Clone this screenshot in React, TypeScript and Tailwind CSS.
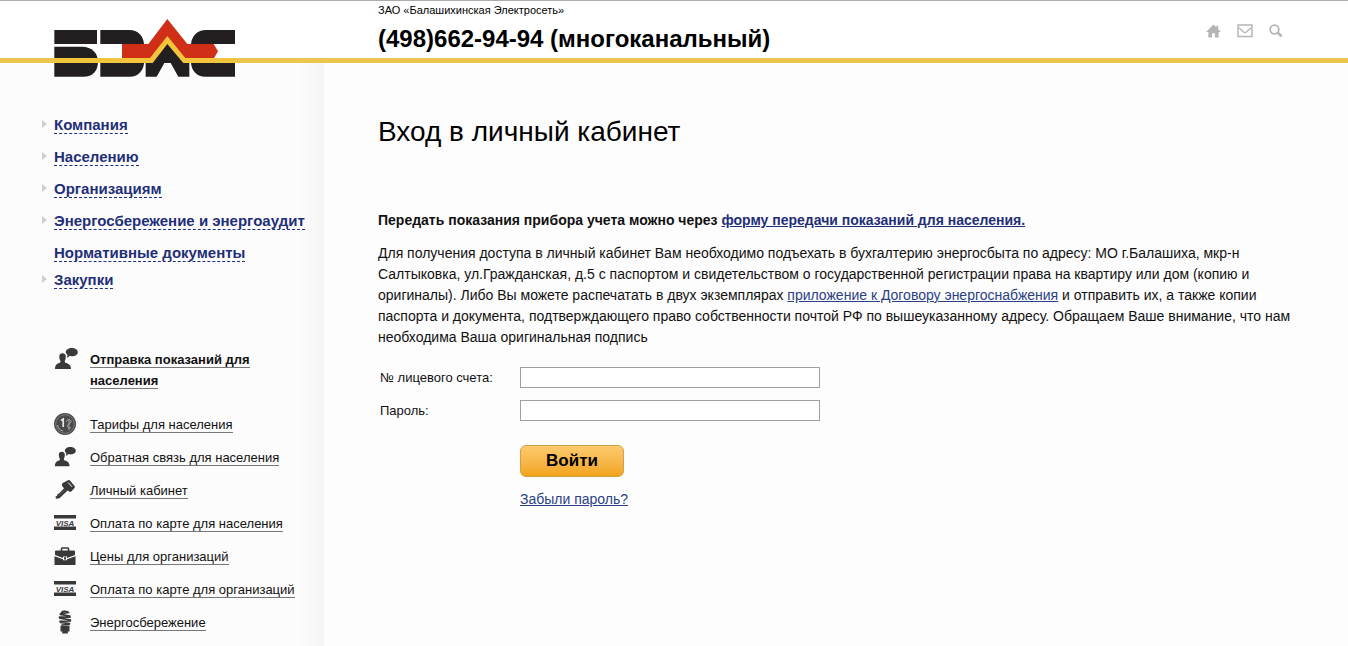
import type { ReactNode } from "react";

function Logo() {
  return (
    <svg viewBox="162 57 543 174" width="181" height="58" role="img" aria-label="БЭЛС">
      <g fill="#231f20">
        <path d="M163 90H291V132H163Z" />
        <path d="M163 140H246C276 140 294 160 294 185C294 212 278 230 250 230H163Z" />
        <path d="M301 90H388C414 90 430 108 432 132H301Z" />
        <path d="M301 189H432C430 213 414 230 390 230H301Z" />
        <path d="M705 90H618C592 90 575 108 573 132H705Z" />
        <path d="M705 189H573C575 213 590 230 616 230H705Z" />
        <path d="M437 187H456L502 128L550 187H568V230H535L512 189H493L470 230H437Z" />
      </g>
      <path fill="#cf2e17" d="M366 132H445L502 57L562 132H641L654 154L641 176H556L502 112L450 176H366Z" />
      <path fill="#f3c53c" d="M162 174H450L502 108L556 174H705V189H550L502 132L458 189H162Z" />
    </svg>
  );
}

function HomeIcon() {
  return (
    <svg viewBox="0 0 16 14" width="15" height="14" fill="#b5b5b7" aria-hidden="true">
      <path d="M8 0L11 3V1.500H13V5L16 8H13.500V14H9.500V9.500H6.500V14H2.500V8H0Z" />
    </svg>
  );
}

function MailIcon() {
  return (
    <svg viewBox="0 0 16 14" width="16" height="14" fill="none" stroke="#b5b5b7" strokeWidth="1.400" aria-hidden="true">
      <path d="M1 1H15V12.500H1Z" />
      <path d="M1.500 3.500L7 8.300Q8 9 9 8.300L14.500 3.500" />
    </svg>
  );
}

function SearchIcon() {
  return (
    <svg viewBox="0 0 14 14" width="14" height="14" fill="none" stroke="#b5b5b7" aria-hidden="true">
      <circle cx="5.500" cy="5.500" r="4.300" strokeWidth="1.800" />
      <path d="M8.800 8.800L12.600 12.400" strokeWidth="2.600" />
    </svg>
  );
}

function PersonIcon() {
  return (
    <svg viewBox="0 0 24 22" width="24" height="22" fill="#39393b" aria-hidden="true">
      <path d="M5.300 8.500C5.300 6 6.600 5.200 8.500 5.200S11.800 6 11.800 8.500C11.800 10.500 11.400 11.800 10.800 12.700V14.300C12.500 15.500 17 15.500 17 21H1C1 15.500 4.800 15.500 6.400 14.300V12.700C5.700 11.800 5.300 10.500 5.300 8.500Z" />
      <path d="M17.800 0C21.100 0 23.800 1.700 23.800 4.200S21.100 8.200 17.800 8.200C17 8.200 16.200 8.100 15.500 7.800C15 8.800 14 9.500 12.800 9.800C13.300 9 13.500 8 13.400 6.800C12.400 6 11.800 5.100 11.800 4.200C11.800 1.700 14.500 0 17.800 0Z" />
    </svg>
  );
}

function CoinIcon() {
  return (
    <svg viewBox="0 0 22 22" width="22" height="22" fill="none" aria-hidden="true">
      <circle cx="11" cy="11" r="11" fill="#4a4a4c" />
      <circle cx="11" cy="11" r="9.300" stroke="#929294" strokeWidth="0.700" />
      <path d="M7 7.500L9.200 6V14" stroke="#e6e6e6" strokeWidth="1.700" />
      <path d="M12.500 9C12.500 6.500 16 5.500 17 8C18 10 14.500 10.500 13.500 12S15 16 17 14.500M15 6.500V17M3.500 12C4 15 6 17.500 9 18" stroke="#a8a8aa" strokeWidth="1" />
    </svg>
  );
}

function KeyIcon() {
  return (
    <svg viewBox="0 0 20 19" width="20" height="19" aria-hidden="true">
      <path fill="#39393b" d="M7.800 3L13 0.300Q14.400 -0.300 15.400 0.900L19.500 6Q20.200 7 19.500 7.900L16.300 11.500Q15.300 12.400 14.200 11.600L12.600 10.500L4.500 18.200L1 18.800L0.500 16.500L2 16L2.500 14L4 13.500L9 8.200L7.200 6Q6.200 4.200 7.800 3Z" />
      <path d="M13.200 2.600L17 6.800" stroke="#fcfcfb" strokeWidth="1" />
      <path d="M4 15.500L10 9.500" stroke="#858587" strokeWidth="0.600" />
    </svg>
  );
}

function VisaIcon() {
  return (
    <svg viewBox="0 0 22 15" width="22" height="15" aria-hidden="true">
      <path fill="#39393b" d="M0 0H22V3.600H0ZM0 11.400H22V15H0Z" />
      <text x="11" y="10.500" textAnchor="middle" fontFamily="Liberation Sans, sans-serif" fontSize="8" fontWeight="700" fontStyle="italic" fill="#39393b">
        VISA
      </text>
    </svg>
  );
}

function CaseIcon() {
  return (
    <svg viewBox="0 0 22 18" width="22" height="18" aria-hidden="true">
      <path d="M7.500 4V1.800Q7.500 1 8.300 1H13.700Q14.500 1 14.500 1.800V4" fill="none" stroke="#39393b" strokeWidth="1.600" />
      <path fill="#39393b" d="M2 3.500H20Q21 3.500 21 4.500V8L13 11V9.500H9V11L1 8V4.500Q1 3.500 2 3.500Z" />
      <path fill="#39393b" d="M0.500 9.200L9 12.200V13.200H13V12.200L21.500 9.200V18H0.500Z" />
      <path fill="#39393b" d="M10 10.200H12V12.400H10Z" />
    </svg>
  );
}

function BulbIcon() {
  return (
    <svg viewBox="0 0 14 24" width="14" height="24" aria-hidden="true">
      <path
        d="M3.500 2.500Q5 1 7 1.200Q9.500 1.200 10.300 2.400L2.500 3.800M2.300 4.300L11.800 6M1.500 7.200L12 7.200M1.800 8.200L12.500 10M2 11.400L12.300 11M2.500 12.300L11.500 13.700M4 15L11 14.500"
        fill="none"
        stroke="#39393b"
        strokeWidth="1.700"
        strokeLinecap="round"
      />
      <path fill="#39393b" d="M2.500 15.800H11.500V21Q11.500 21.500 11 21.500H9.800V23.500H4.200V21.500H3Q2.500 21.500 2.500 21Z" />
    </svg>
  );
}

const sections = [
  { label: "Компания", arrow: true },
  { label: "Населению", arrow: true },
  { label: "Организациям", arrow: true },
  { label: "Энергосбережение и энергоаудит", arrow: true },
  { label: "Нормативные документы", arrow: false },
  { label: "Закупки", arrow: true },
];

const services: { label: string; icon: ReactNode }[] = [
  { label: "Тарифы для населения", icon: <CoinIcon /> },
  { label: "Обратная связь для населения", icon: <PersonIcon /> },
  { label: "Личный кабинет", icon: <KeyIcon /> },
  { label: "Оплата по карте для населения", icon: <VisaIcon /> },
  { label: "Цены для организаций", icon: <CaseIcon /> },
  { label: "Оплата по карте для организаций", icon: <VisaIcon /> },
  { label: "Энергосбережение", icon: <BulbIcon /> },
];

function Sidebar() {
  return (
    <aside className="w-[324px] shrink-0 bg-linear-to-r from-[#fdfcfc] from-92% to-[#f5f5f4] pt-[54px]">
      <nav aria-label="Разделы">
        <ul className="pl-[42px]">
          {sections.map((s) => (
            <li key={s.label} className={s.arrow ? "flex h-8 items-start" : "flex h-[27px] items-start"}>
              <span className="flex w-3 shrink-0 pt-[3px]">
                {s.arrow && (
                  <svg viewBox="0 0 5 8" width="5" height="8" aria-hidden="true">
                    <path d="M0 0L5 4L0 8Z" fill="#d0d0d2" />
                  </svg>
                )}
              </span>
              <a href="#" className="border-b border-dashed border-[#1f2f78] text-[15px] leading-4 font-bold whitespace-nowrap text-[#1f2f78]">
                {s.label}
              </a>
            </li>
          ))}
        </ul>
      </nav>
      <ul className="mt-11 pl-[54px]">
        <li className="mb-4 flex">
          <span className="w-9 shrink-0">
            <PersonIcon />
          </span>
          <a href="#" className="w-44 pt-px text-[13px] leading-[21px] font-bold">
            <span className="border-b border-[#777]">Отправка показаний для населения</span>
          </a>
        </li>
        {services.map((s) => (
          <li key={s.label} className="flex h-[33px] items-center">
            <span className="flex w-9 shrink-0">
              <span className="flex w-[22px] justify-center">{s.icon}</span>
            </span>
            <a href="#" className="mt-[2px] border-b border-[#777] text-[13px] leading-[15px] whitespace-nowrap">
              {s.label}
            </a>
          </li>
        ))}
      </ul>
    </aside>
  );
}

function LoginForm() {
  return (
    <form className="mt-[19px] pl-[2px]" onSubmit={(e) => e.preventDefault()}>
      <div className="mb-3 flex items-center">
        <label htmlFor="account" className="w-[140px] text-[13px] leading-[21px]">
          № лицевого счета:
        </label>
        <input id="account" type="text" className="h-[21px] w-[300px] border border-[#a0a0a0] bg-white px-1 text-sm" />
      </div>
      <div className="flex items-center">
        <label htmlFor="password" className="w-[140px] text-[13px] leading-[21px]">
          Пароль:
        </label>
        <input id="password" type="password" className="h-[21px] w-[300px] border border-[#a0a0a0] bg-white px-1 text-sm" />
      </div>
      <div className="mt-6 flex flex-col items-start pl-[140px]">
        <button
          type="submit"
          className="h-8 w-[104px] rounded-md border border-[#d3a04a] bg-linear-to-b from-[#fccb6c] to-[#f2a416] text-[17px] leading-5 font-bold text-black"
        >
          Войти
        </button>
        <a href="#" className="mt-3 text-sm leading-5 text-[#2a4185] underline">
          Забыли пароль?
        </a>
      </div>
    </form>
  );
}

export default function App() {
  return (
    <div className="flex min-h-screen flex-col bg-[#fefdfd] font-['Liberation_Sans',Arial,sans-serif] text-[#111]">
      <header className="relative z-10 flex h-[63px] items-start border-t border-b-[5px] border-t-[#acacac] border-b-[#ebc64c] bg-white">
        <a href="#" className="mt-[18px] w-[324px] shrink-0 pl-[54px]">
          <Logo />
        </a>
        <div className="flex-1 pl-[54px] text-black">
          <p className="pt-[2px] text-[11px] leading-[14px]">ЗАО «Балашихинская Электросеть»</p>
          <p className="mt-2 text-2xl leading-7 font-bold">(498)662-94-94 (многоканальный)</p>
        </div>
        <nav aria-label="Быстрые ссылки" className="flex gap-4 pt-[23px] pr-[65px]">
          <a href="#" aria-label="Главная">
            <HomeIcon />
          </a>
          <a href="#" aria-label="Почта">
            <MailIcon />
          </a>
          <a href="#" aria-label="Поиск">
            <SearchIcon />
          </a>
        </nav>
      </header>
      <div className="flex flex-1">
        <Sidebar />
        <main className="flex-1 pt-[53px] pr-[54px] pl-[54px]">
          <h1 className="text-[28px] leading-8 text-black">Вход в личный кабинет</h1>
          <p className="mt-[62px] text-sm leading-[21px] font-bold">
            Передать показания прибора учета можно через{" "}
            <a href="#" className="text-[#1f2f78] underline">
              форму передачи показаний для населения.
            </a>
          </p>
          <p className="mt-3 text-sm leading-[21px]">
            Для получения доступа в личный кабинет Вам необходимо подъехать в бухгалтерию энергосбыта по адресу: МО
            г.Балашиха, мкр-н Салтыковка, ул.Гражданская, д.5 с паспортом и свидетельством о государственной регистрации
            права на квартиру или дом (копию и оригиналы). Либо Вы можете распечатать в двух экземплярах{" "}
            <a href="#" className="text-[#2a4185] underline">
              приложение к Договору энергоснабжения
            </a>{" "}
            и отправить их, а также копии паспорта и документа, подтверждающего право собственности почтой РФ по
            вышеуказанному адресу. Обращаем Ваше внимание, что нам необходима Ваша оригинальная подпись
          </p>
          <LoginForm />
        </main>
      </div>
    </div>
  );
}
